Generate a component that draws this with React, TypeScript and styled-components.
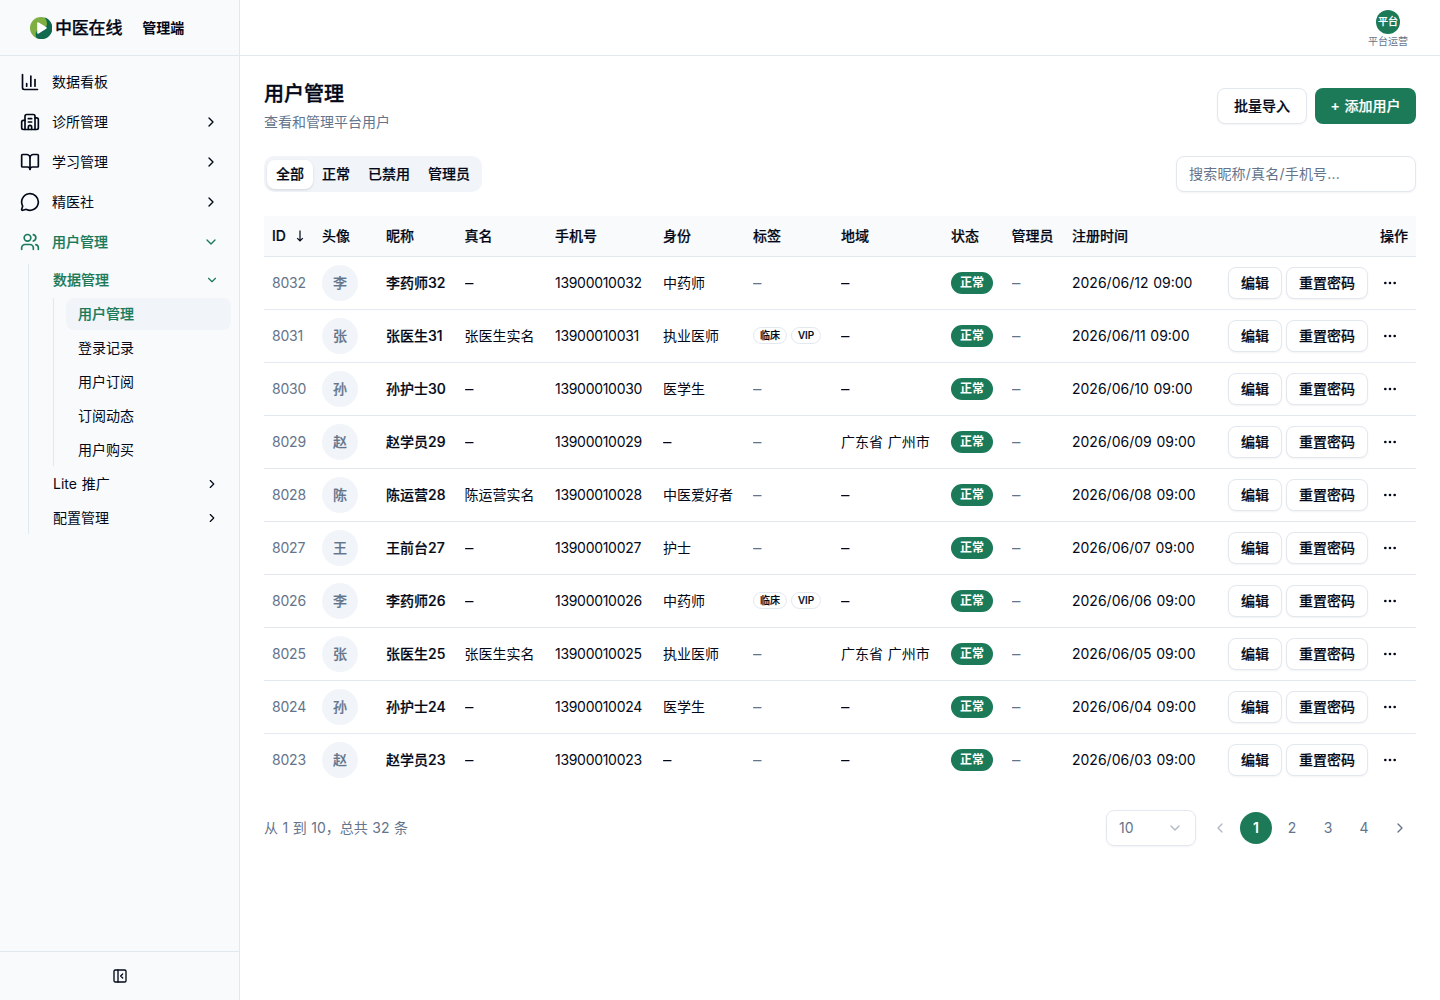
import React from 'react';
import styled, { createGlobalStyle, css } from 'styled-components';
import {
  BookOpen,
  Building2,
  ChartColumn,
  ChevronDown,
  ChevronLeft,
  ChevronRight,
  Ellipsis,
  MessageCircle,
  PanelLeftClose,
  Users,
} from 'lucide-react';

const color = {
  ink: '#020817',
  muted: '#64748b',
  line: '#e2e8f0',
  soft: '#f1f5f9',
  surface: '#f8fafc',
  brand: '#1c7a59',
};

const medium = css`
  font-weight: 500;
  -webkit-text-stroke: 0.2px currentColor;
`;

const GlobalStyle = createGlobalStyle`
  *, *::before, *::after { box-sizing: border-box; }
  body {
    margin: 0;
    background: #fff;
    color: ${color.ink};
    font-family: Inter, "Noto Sans CJK SC", sans-serif;
    font-size: 14px;
    line-height: 20px;
    word-spacing: 0.8px;
  }
  button, input { font: inherit; color: inherit; word-spacing: inherit; }
  h1, p { margin: 0; }
`;

const Shell = styled.div`
  display: flex;
  height: 1000px;
  overflow: hidden;
`;

const Sidebar = styled.aside`
  display: flex;
  flex-direction: column;
  width: 240px;
  flex: none;
  background: ${color.surface};
  border-right: 1px solid ${color.line};
`;

const Brand = styled.div`
  display: flex;
  align-items: center;
  height: 56px;
  flex: none;
  padding-left: 30px;
  border-bottom: 1px solid ${color.line};
`;

const BrandName = styled.span`
  margin-left: 3px;
  font-size: 17px;
  font-weight: 500;
  letter-spacing: -0.2px;
  -webkit-text-stroke: 0.25px currentColor;
`;

const BrandRole = styled.span`
  margin-left: 20px;
  font-weight: 600;
`;

const Nav = styled.nav`
  display: flex;
  flex-direction: column;
  gap: 4px;
  flex: 1;
  padding: 8px 8px;
`;

const navButton = css<{ $active?: boolean }>`
  display: flex;
  align-items: center;
  border: 0;
  background: transparent;
  text-align: left;
  color: ${(p) => (p.$active ? color.brand : color.ink)};
  ${(p) => p.$active && medium}
`;

const NavItem = styled.button<{ $active?: boolean }>`
  ${navButton}
  height: 36px;
  gap: 12px;
  padding: 0 12px;
  svg { flex: none; }
`;

const Label = styled.span`
  flex: 1;
`;

const SubMenu = styled.div`
  display: flex;
  flex-direction: column;
  gap: 2px;
  margin-left: 20px;
  padding-left: 12px;
  border-left: 1px solid ${color.line};
`;

const SubItem = styled.button<{ $active?: boolean }>`
  ${navButton}
  height: 32px;
  padding: 0 12px;
`;

const LeafMenu = styled.div`
  display: flex;
  flex-direction: column;
  gap: 2px;
  margin-left: 12px;
  padding-left: 12px;
  border-left: 1px solid ${color.line};
`;

const Leaf = styled.button<{ $active?: boolean }>`
  ${navButton}
  height: 32px;
  padding: 0 12px;
  border-radius: 8px;
  background: ${(p) => (p.$active ? color.soft : 'transparent')};
`;

const SidebarFoot = styled.div`
  display: flex;
  align-items: center;
  justify-content: center;
  height: 49px;
  border-top: 1px solid ${color.line};
`;

const Main = styled.div`
  display: flex;
  flex-direction: column;
  flex: 1;
  min-width: 0;
`;

const TopBar = styled.header`
  display: flex;
  justify-content: flex-end;
  align-items: center;
  height: 56px;
  padding: 1px 32px 0 0;
  border-bottom: 1px solid ${color.line};
`;

const Account = styled.div`
  display: flex;
  flex-direction: column;
  align-items: center;
  gap: 2px;
  font-size: 10px;
  line-height: 11px;
  color: ${color.muted};
`;

const AccountBadge = styled.span`
  display: grid;
  place-items: center;
  width: 24px;
  height: 24px;
  border-radius: 50%;
  background: ${color.brand};
  color: #fff;
  ${medium}
`;

const Page = styled.main`
  padding: 24px;
`;

const PageHead = styled.div`
  display: flex;
  justify-content: space-between;
  align-items: center;
  height: 52px;
`;

const Title = styled.h1`
  font-size: 20px;
  line-height: 28px;
  font-weight: 500;
  -webkit-text-stroke: 0.35px currentColor;
`;

const Subtitle = styled.p`
  margin-top: 4px;
  color: ${color.muted};
`;

const Actions = styled.div`
  display: flex;
  justify-content: flex-end;
  gap: 8px;
`;

const Button = styled.button<{ $primary?: boolean }>`
  height: 36px;
  padding: 0 16px;
  border: ${(p) => (p.$primary ? '0' : `1px solid ${color.line}`)};
  border-radius: 8px;
  background: ${(p) => (p.$primary ? color.brand : '#fff')};
  color: ${(p) => (p.$primary ? '#fff' : color.ink)};
  ${medium}
  white-space: nowrap;
  box-shadow: ${(p) => (p.$primary ? 'none' : '0 1px 2px rgba(0, 0, 0, 0.05)')};
`;

const AddButton = styled(Button)`
  width: 101px;
  padding: 0;
`;

const Toolbar = styled.div`
  display: flex;
  justify-content: space-between;
  margin: 24px 0;
`;

const Tabs = styled.div`
  display: flex;
  align-items: center;
  height: 36px;
  padding: 3px;
  border-radius: 10px;
  background: ${color.soft};
`;

const Tab = styled.button<{ $active?: boolean }>`
  height: 29px;
  padding: 0 9px;
  border: 0;
  border-radius: 8px;
  ${medium}
  background: ${(p) => (p.$active ? '#fff' : 'transparent')};
  box-shadow: ${(p) => (p.$active ? '0 1px 3px rgba(0, 0, 0, 0.1), 0 1px 2px -1px rgba(0, 0, 0, 0.1)' : 'none')};
`;

const Search = styled.input`
  width: 240px;
  height: 36px;
  padding: 0 12px 2px;
  border: 1px solid ${color.line};
  border-radius: 8px;
  background: #fff;
  letter-spacing: 0.2px;
  box-shadow: 0 1px 2px rgba(0, 0, 0, 0.05);
  &::placeholder { color: ${color.muted}; opacity: 1; }
`;

const Table = styled.table`
  width: 1152px;
  table-layout: fixed;
  border-collapse: separate;
  border-spacing: 0;
`;

const Th = styled.th<{ $right?: boolean }>`
  height: 41px;
  padding: 0 8px;
  background: ${color.surface};
  border-bottom: 1px solid ${color.line};
  ${medium}
  text-align: ${(p) => (p.$right ? 'right' : 'left')};
  white-space: nowrap;
`;

const SortLabel = styled.span`
  display: flex;
  align-items: center;
  gap: 10px;
`;

const Row = styled.tr`
  &:last-child td { border-bottom: 0; height: 52px; }
`;

const Td = styled.td<{ $muted?: boolean; $strong?: boolean }>`
  height: 53px;
  padding: 0 8px;
  border-bottom: 1px solid ${color.line};
  color: ${(p) => (p.$muted ? color.muted : color.ink)};
  ${(p) => p.$strong && medium}
  white-space: nowrap;
`;

const Phone = styled.span`
  letter-spacing: -0.3px;
`;

const IdText = styled.span`
  letter-spacing: -0.2px;
`;

const Dash = styled.span`
  display: inline-block;
  transform: scaleX(1.2);
  transform-origin: left;
`;

const Avatar = styled.span`
  display: grid;
  place-items: center;
  width: 36px;
  height: 36px;
  border-radius: 50%;
  background: ${color.soft};
  color: ${color.muted};
  ${medium}
`;

const TagList = styled.div`
  display: flex;
  gap: 4px;
  margin-top: -1px;
  color: ${color.ink};
`;

const Tag = styled.span`
  height: 17px;
  padding: 0 6px;
  border: 1px solid ${color.line};
  border-radius: 9px;
  font-size: 10px;
  line-height: 15px;
  ${medium}
`;

const Status = styled.span`
  display: flex;
  align-items: center;
  justify-content: center;
  width: 42px;
  height: 22px;
  border-radius: 11px;
  background: ${color.brand};
  color: #fff;
  font-size: 12px;
  line-height: 16px;
  font-weight: 600;
`;

const RowActions = styled.div`
  display: flex;
  justify-content: flex-end;
  gap: 4px;
`;

const SmallButton = styled(Button)`
  height: 32px;
  padding: 0 12px;
`;

const MoreButton = styled.button`
  display: grid;
  place-items: center;
  width: 36px;
  height: 32px;
  padding: 0;
  border: 0;
  background: transparent;
`;

const Footer = styled.div`
  display: flex;
  align-items: center;
  justify-content: space-between;
  margin-top: 24px;
  height: 36px;
  color: ${color.muted};
  word-spacing: 0.6px;
`;

const Pager = styled.div`
  display: flex;
  align-items: center;
  gap: 4px;
`;

const PageSize = styled.div`
  display: flex;
  align-items: center;
  justify-content: space-between;
  width: 90px;
  height: 36px;
  margin-right: 4px;
  padding: 0 12px;
  border: 1px solid ${color.line};
  border-radius: 8px;
  box-shadow: 0 1px 2px rgba(0, 0, 0, 0.05);
  svg { opacity: 0.5; }
`;

const PageButton = styled.button<{ $current?: boolean; $dim?: boolean }>`
  display: grid;
  place-items: center;
  width: 32px;
  height: 32px;
  padding: 0;
  border: 0;
  border-radius: 50%;
  background: ${(p) => (p.$current ? color.brand : 'transparent')};
  color: ${(p) => (p.$current ? '#fff' : color.muted)};
  font-weight: ${(p) => (p.$current ? 600 : 400)};
  opacity: ${(p) => (p.$dim ? 0.5 : 1)};
`;

const Logo = () => (
  <svg width="22" height="22" viewBox="0 0 22 22">
    <circle cx="11" cy="11" r="11" fill="#7fae42" />
    <path d="M14.5 0.6A11 11 0 1 1 6.5 21C5 18.5 5.5 15 8 12.5L16.5 9Q18 4 14.5 0.6Z" fill="#11694f" />
    <path d="M7.2 6.3Q7.2 4.6 8.7 5.4L16.2 9.9Q17.4 10.8 16.2 11.7L8.7 16.4Q7.2 17.2 7.2 15.7Z" fill="#fff" />
  </svg>
);

const SortArrow = () => (
  <svg width="8" height="12" viewBox="0 0 8 12" fill="none" stroke="currentColor" strokeWidth="1.2">
    <path d="M4 0.5V11M1.2 8.2L4 11L6.8 8.2" />
  </svg>
);

const widths = [50, 64, 78.5, 90.5, 108, 90, 88, 110, 60.5, 60.5, 131, 221];

const titles = ['头像', '昵称', '真名', '手机号', '身份', '标签', '地域', '状态', '管理员', '注册时间'];

type User = { id: number; nick: string; real?: string; role?: string; tags?: string[]; area?: string; day: string };

const users: User[] = [
  { id: 8032, nick: '李药师32', role: '中药师', day: '12' },
  { id: 8031, nick: '张医生31', real: '张医生实名', role: '执业医师', tags: ['临床', 'VIP'], day: '11' },
  { id: 8030, nick: '孙护士30', role: '医学生', day: '10' },
  { id: 8029, nick: '赵学员29', area: '广东省 广州市', day: '09' },
  { id: 8028, nick: '陈运营28', real: '陈运营实名', role: '中医爱好者', day: '08' },
  { id: 8027, nick: '王前台27', role: '护士', day: '07' },
  { id: 8026, nick: '李药师26', role: '中药师', tags: ['临床', 'VIP'], day: '06' },
  { id: 8025, nick: '张医生25', real: '张医生实名', role: '执业医师', area: '广东省 广州市', day: '05' },
  { id: 8024, nick: '孙护士24', role: '医学生', day: '04' },
  { id: 8023, nick: '赵学员23', day: '03' },
];

const Value = ({ text }: { text?: string }) => (text ? <>{text}</> : <Dash>–</Dash>);

export default function App() {
  return (
    <>
      <GlobalStyle />
      <Shell>
        <Sidebar>
          <Brand>
            <Logo />
            <BrandName>中医在线</BrandName>
            <BrandRole>管理端</BrandRole>
          </Brand>
          <Nav>
            <NavItem><ChartColumn size={20} /><Label>数据看板</Label></NavItem>
            <NavItem><Building2 size={20} /><Label>诊所管理</Label><ChevronRight size={16} /></NavItem>
            <NavItem><BookOpen size={20} /><Label>学习管理</Label><ChevronRight size={16} /></NavItem>
            <NavItem><MessageCircle size={20} /><Label>精医社</Label><ChevronRight size={16} /></NavItem>
            <NavItem $active><Users size={20} /><Label>用户管理</Label><ChevronDown size={16} /></NavItem>
            <SubMenu>
              <SubItem $active><Label>数据管理</Label><ChevronDown size={14} /></SubItem>
              <LeafMenu>
                <Leaf $active>用户管理</Leaf>
                <Leaf>登录记录</Leaf>
                <Leaf>用户订阅</Leaf>
                <Leaf>订阅动态</Leaf>
                <Leaf>用户购买</Leaf>
              </LeafMenu>
              <SubItem><Label>Lite 推广</Label><ChevronRight size={14} /></SubItem>
              <SubItem><Label>配置管理</Label><ChevronRight size={14} /></SubItem>
            </SubMenu>
          </Nav>
          <SidebarFoot><PanelLeftClose size={16} /></SidebarFoot>
        </Sidebar>
        <Main>
          <TopBar>
            <Account>
              <AccountBadge>平台</AccountBadge>
              平台运营
            </Account>
          </TopBar>
          <Page>
            <PageHead>
              <div>
                <Title>用户管理</Title>
                <Subtitle>查看和管理平台用户</Subtitle>
              </div>
              <Actions>
                <Button>批量导入</Button>
                <AddButton $primary>+ 添加用户</AddButton>
              </Actions>
            </PageHead>
            <Toolbar>
              <Tabs>
                <Tab $active>全部</Tab>
                <Tab>正常</Tab>
                <Tab>已禁用</Tab>
                <Tab>管理员</Tab>
              </Tabs>
              <Search placeholder="搜索昵称/真名/手机号..." />
            </Toolbar>
            <Table>
              <colgroup>
                {widths.map((w, i) => <col key={i} style={{ width: w }} />)}
              </colgroup>
              <thead>
                <tr>
                  <Th><SortLabel>ID <SortArrow /></SortLabel></Th>
                  {titles.map((t) => <Th key={t}>{t}</Th>)}
                  <Th $right>操作</Th>
                </tr>
              </thead>
              <tbody>
                {users.map((u) => (
                  <Row key={u.id}>
                    <Td $muted><IdText>{u.id}</IdText></Td>
                    <Td><Avatar>{u.nick[0]}</Avatar></Td>
                    <Td $strong>{u.nick}</Td>
                    <Td><Value text={u.real} /></Td>
                    <Td><Phone>{`1390001${String(u.id - 8000).padStart(4, '0')}`}</Phone></Td>
                    <Td><Value text={u.role} /></Td>
                    <Td $muted>
                      {u.tags ? <TagList>{u.tags.map((t) => <Tag key={t}>{t}</Tag>)}</TagList> : <Value />}
                    </Td>
                    <Td><Value text={u.area} /></Td>
                    <Td><Status>正常</Status></Td>
                    <Td $muted><Value /></Td>
                    <Td>{`2026/06/${u.day} 09:00`}</Td>
                    <Td>
                      <RowActions>
                        <SmallButton>编辑</SmallButton>
                        <SmallButton>重置密码</SmallButton>
                        <MoreButton><Ellipsis size={16} /></MoreButton>
                      </RowActions>
                    </Td>
                  </Row>
                ))}
              </tbody>
            </Table>
            <Footer>
              <span>从 1 到 10，总共 32 条</span>
              <Pager>
                <PageSize>10<ChevronDown size={16} /></PageSize>
                <PageButton $dim><ChevronLeft size={16} /></PageButton>
                <PageButton $current>1</PageButton>
                <PageButton>2</PageButton>
                <PageButton>3</PageButton>
                <PageButton>4</PageButton>
                <PageButton><ChevronRight size={16} /></PageButton>
              </Pager>
            </Footer>
          </Page>
        </Main>
      </Shell>
    </>
  );
}
